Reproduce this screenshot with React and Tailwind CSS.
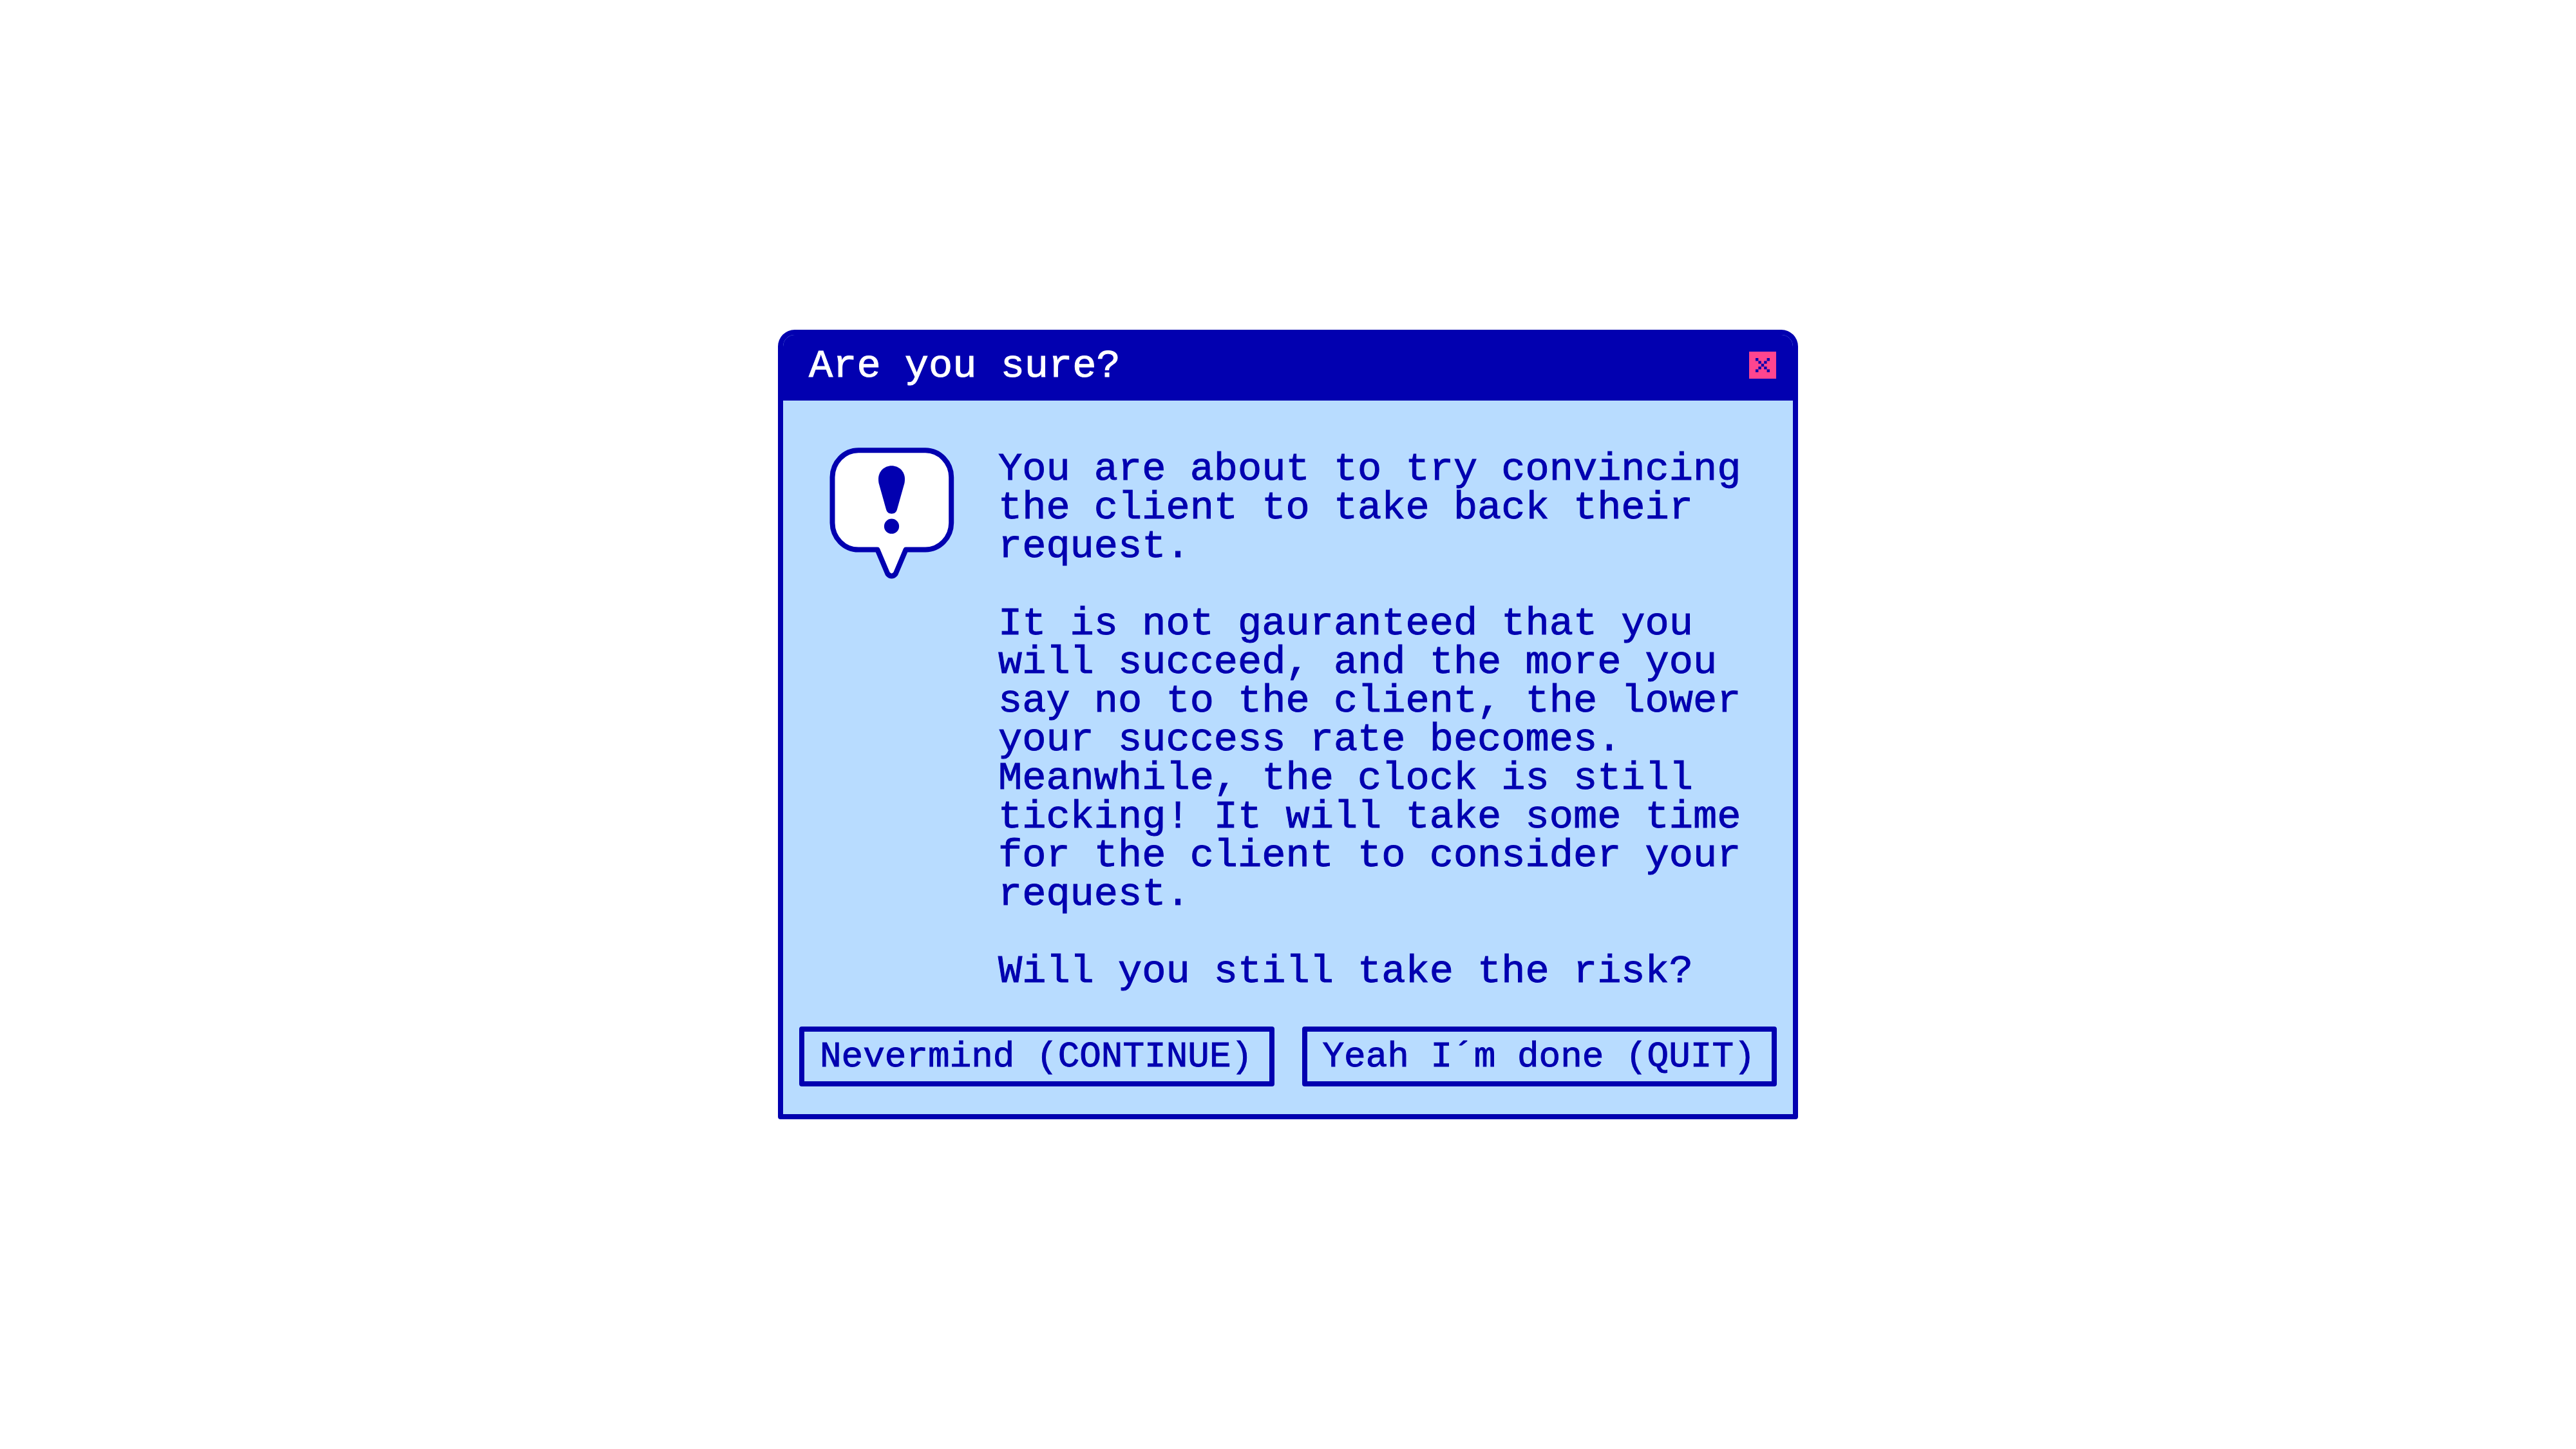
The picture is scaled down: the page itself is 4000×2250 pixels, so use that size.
import React from "react";

function AlertBubble() {
  return (
    <svg
      viewBox="0 0 194 204"
      className="h-[204px] w-[194px] shrink-0"
      role="img"
      aria-label="Warning"
    >
      <path
        d="M45 4.300H149A40.500 42 0 0 1 189.200 46V117A40.500 42 0 0 1 149 158.600H118.500L102.700 196Q96.500 203 90.300 196L74.500 158.600H45A40.500 42 0 0 1 4.500 117V46A40.500 42 0 0 1 45 4.300Z"
        fill="#ffffff"
        stroke="#0200b0"
        strokeWidth="8"
        strokeLinejoin="round"
      />
      <path
        d="M96.500 28.300C108 28.300 117 37 117 49Q117 52 116.500 55L105 96C103.500 101 100.500 102.700 96.500 102.700S89.500 101 88 96L76.500 55Q76 52 76 49C76 37 85 28.300 96.500 28.300Z"
        fill="#0200b0"
      />
      <circle cx="96.500" cy="122.200" r="11.600" fill="#0200b0" />
    </svg>
  );
}

function CloseIcon() {
  return (
    <svg viewBox="0 0 5 5" className="h-[22px] w-[22px]" fill="#0200b0" aria-hidden="true">
      <path d="M0 0h1v1h1v1h1v-1h1v-1h1v1h-1v1h-1v1h1v1h1v1h-1v-1h-1v-1h-1v1h-1v1h-1v-1h1v-1h1v-1h-1v-1h-1z" />
    </svg>
  );
}

function DialogButton({ children }) {
  return (
    <button
      type="button"
      className="flex-1 rounded-[4px] border-8 border-[#0200b0] pt-[9px] pb-2 pl-6 text-left text-[56px] leading-[60px] whitespace-nowrap"
    >
      {children}
    </button>
  );
}

export default function App() {
  return (
    <main className="flex min-h-screen items-center justify-center bg-white font-['Liberation_Mono',monospace] text-[#0200b0] [-webkit-text-stroke:1px_currentColor]">
      <section
        role="dialog"
        aria-labelledby="dialog-title"
        aria-describedby="dialog-message"
        className="w-full max-w-[1584px] overflow-hidden rounded-t-[26px] rounded-b-[4px] border-8 border-[#0200b0] bg-[#b8dcff]"
      >
        <header className="flex items-start justify-between bg-[#0200b0] pt-[26px] pr-[26px] pb-[30px] pl-10">
          <h1 id="dialog-title" className="text-[62px] leading-[46px] text-white">
            Are you sure?
          </h1>
          <button
            type="button"
            aria-label="Close"
            className="flex h-[42px] w-[42px] items-center justify-center bg-[#ff458f]"
          >
            <CloseIcon />
          </button>
        </header>

        <div className="flex items-start gap-[68px] pt-[73px] pr-9 pl-[72px]">
          <AlertBubble />
          <div id="dialog-message" className="min-w-0 flex-1 space-y-[60px] pt-1 text-[62px] leading-[60px]">
            <p>
              You are about to try convincing the client to take back their request.
            </p>
            <p>
              It is not gauranteed that you will succeed, and the more you say no to the
              client, the lower your success rate becomes. Meanwhile, the clock is still
              ticking! It will take some time for the client to consider your request.
            </p>
            <p>Will you still take the risk?</p>
          </div>
        </div>

        <footer className="flex gap-[43px] px-[25px] pt-[55px] pb-[43px]">
          <DialogButton>Nevermind (CONTINUE)</DialogButton>
          <DialogButton>Yeah I´m done (QUIT)</DialogButton>
        </footer>
      </section>
    </main>
  );
}
